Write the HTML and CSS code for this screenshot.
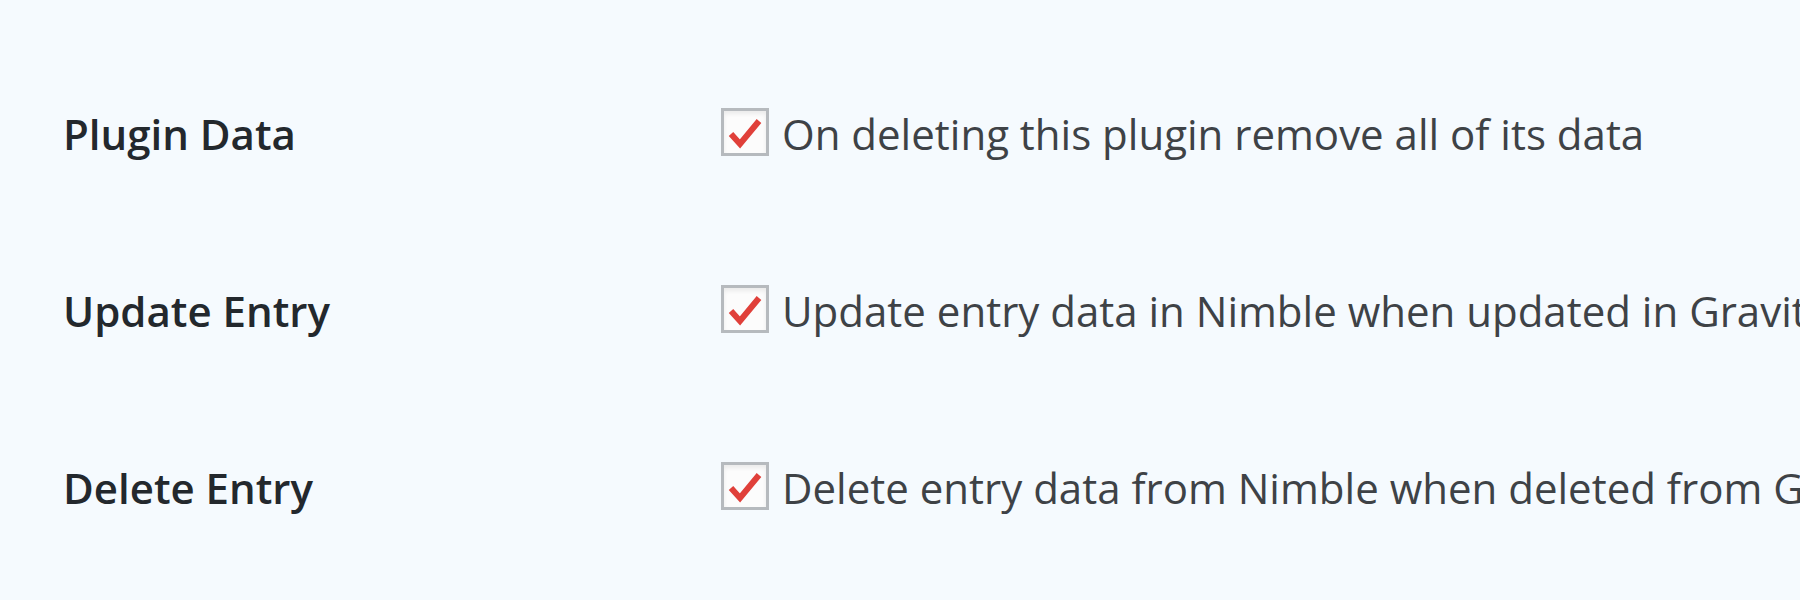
FILE: index.html
```html
<!DOCTYPE html>
<html>
<head>
<meta charset="utf-8">
<link rel="stylesheet" href="styles.css">
</head>
<body>
<div class="form-table">
  <div class="row">
    <div class="label">Plugin Data</div>
    <label class="field"><span class="checkbox"><svg viewBox="0 0 42 42" width="42" height="42"><path d="M7 23 L16 33 L35 10" fill="none" stroke="#e0403a" stroke-width="6"/></svg></span><span class="desc">On deleting this plugin remove all of its data</span></label>
  </div>
  <div class="row">
    <div class="label">Update Entry</div>
    <label class="field"><span class="checkbox"><svg viewBox="0 0 42 42" width="42" height="42"><path d="M7 23 L16 33 L35 10" fill="none" stroke="#e0403a" stroke-width="6"/></svg></span><span class="desc">Update entry data in Nimble when updated in Gravity Forms</span></label>
  </div>
  <div class="row">
    <div class="label">Delete Entry</div>
    <label class="field"><span class="checkbox"><svg viewBox="0 0 42 42" width="42" height="42"><path d="M7 23 L16 33 L35 10" fill="none" stroke="#e0403a" stroke-width="6"/></svg></span><span class="desc">Delete entry data from Nimble when deleted from Gravity Forms</span></label>
  </div>
</div>
</body>
</html>
```
FILE: styles.css
```css
html, body {
  margin: 0;
  padding: 0;
  background: #f5fafe;
  overflow: hidden;
}
body {
  width: 1800px;
  height: 600px;
  font-family: "Open Sans", "Liberation Sans", sans-serif;
  color: #23282d;
}
.form-table {
  display: flex;
  flex-direction: column;
  padding: 43px 0 0 63px;
}
.row {
  display: grid;
  grid-template-columns: 658px auto;
  align-items: center;
  height: 177px;
  white-space: nowrap;
}
.label {
  font-size: 42px;
  font-weight: 600;
  line-height: 48px;
  padding-top: 5px;
}
.field {
  display: flex;
  align-items: center;
  gap: 13px;
}
.checkbox {
  box-sizing: border-box;
  width: 48px;
  height: 48px;
  border: 3px solid #b6babe;
  background: #fcfcfc;
  box-shadow: inset 0 3px 4px rgba(0,0,0,0.07);
  display: flex;
  align-items: center;
  justify-content: center;
  flex: none;
}
.checkbox svg {
  display: block;
}
.desc {
  font-size: 42px;
  font-weight: 400;
  line-height: 48px;
  padding-top: 5px;
  color: #3e4246;
}
```
